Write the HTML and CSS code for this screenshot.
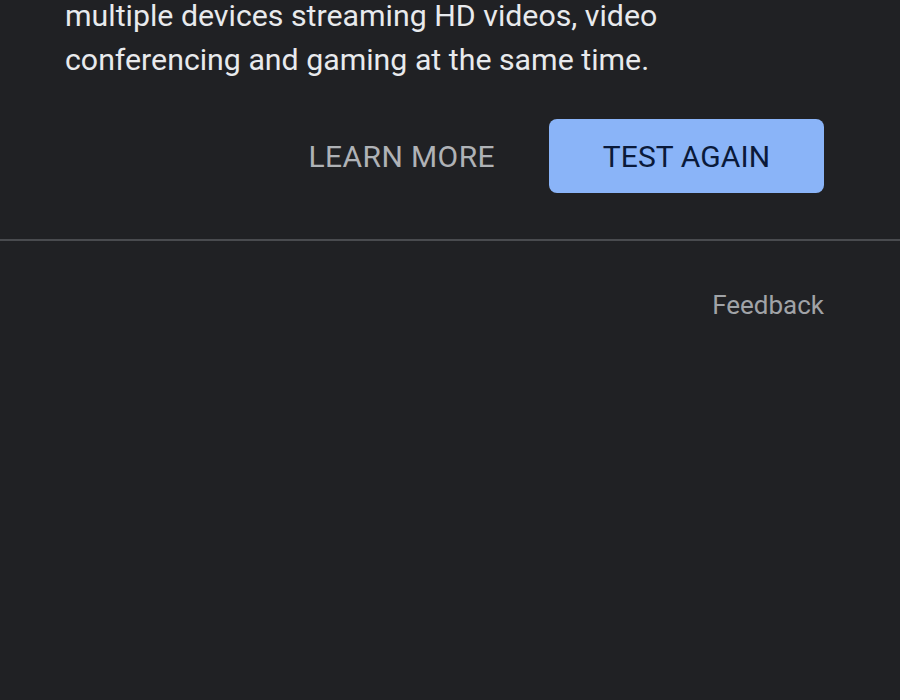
FILE: index.html
```html
<!DOCTYPE html>
<html lang="en">
<head>
<meta charset="utf-8">
<title>Speed test result</title>
<link rel="stylesheet" href="styles.css">
</head>
<body>
<main class="page">
  <section class="result">
    <p class="summary">multiple devices streaming HD videos, video conferencing and gaming at the same time.</p>
    <div class="actions">
      <button class="btn btn-text">LEARN MORE</button>
      <button class="btn btn-filled">TEST AGAIN</button>
    </div>
  </section>
  <hr class="divider">
  <footer class="footer">
    <a class="feedback" href="#">Feedback</a>
  </footer>
</main>
</body>
</html>
```

FILE: styles.css
```css
html, body {
  margin: 0;
  padding: 0;
  background: #202124;
  height: 100%;
}

body {
  font-family: Roboto, "Liberation Sans", Arial, sans-serif;
  overflow: hidden;
}

.page {
  display: flex;
  flex-direction: column;
}

.result {
  padding: 0 76px 0 65px;
}

.summary {
  margin: -6px 0 0 0;
  max-width: 700px;
  font-size: 30.3px;
  line-height: 44px;
  color: #e8eaed;
}

.actions {
  margin-top: 37px;
  display: flex;
  justify-content: flex-end;
  align-items: center;
}

.btn {
  font-family: Roboto, "Liberation Sans", Arial, sans-serif;
  font-size: 30px;
  font-weight: 400;
  height: 74px;
  padding: 0 53px;
  border: none;
  background: none;
  cursor: pointer;
}

.btn-text {
  color: #afb2b6;
  padding: 0 54px;
  letter-spacing: 0.4px;
}

.btn-filled {
  width: 275px;
  background: #8ab4f8;
  color: #0a1a3a;
  border-radius: 8px;
  letter-spacing: 0.1px;
}

.divider {
  margin: 46px 0 0 0;
  border: none;
  height: 2px;
  background: #494b4f;
}

.footer {
  display: flex;
  justify-content: flex-end;
  padding: 48px 76px 0 64px;
}

.feedback {
  font-size: 26px;
  line-height: 32px;
  color: #a0a3a7;
  text-decoration: none;
}
```
